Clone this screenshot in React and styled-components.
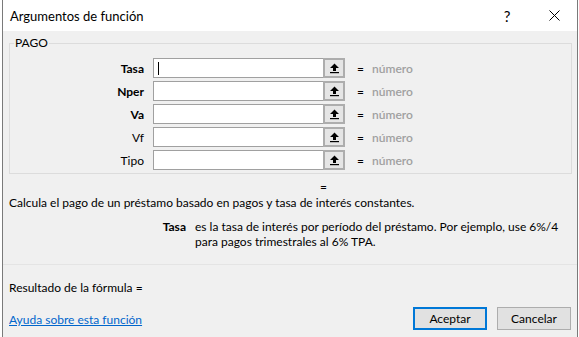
import React from 'react';
import styled, { createGlobalStyle } from 'styled-components';

const GlobalStyle = createGlobalStyle`
	body {
		margin: 0;
		background: #ffffff;
		font-family: 'Lato', 'Noto Sans', sans-serif;
		font-size: 12px;
		color: #000000;
	}
`;

const Window = styled.div`
	width: 574px;
	height: 337px;
	margin-left: 2px;
	border-left: 1px solid #7a7a7a;
	border-right: 1px solid #7a7a7a;
	background: #f0f0f0;
	display: flex;
	flex-direction: column;
	overflow: hidden;
`;

const TitleBar = styled.div`
	height: 31px;
	flex-shrink: 0;
	background: #ffffff;
	display: flex;
	align-items: center;
	padding-left: 7px;
	.title {
		flex: 1;
		font-size: 13px;
	}
	.help {
		width: 30px;
		font-size: 15px;
		text-align: center;
		margin-right: 17px;
	}
	.close {
		width: 30px;
		display: flex;
		justify-content: center;
		margin-right: 8px;
	}
`;

const Content = styled.div`
	flex: 1;
	display: flex;
	flex-direction: column;
	padding: 0 6px;
`;

const Group = styled.fieldset`
	margin: 4px 0 0 0;
	width: 563px;
	box-sizing: border-box;
	border: 1px solid #dcdcdc;
	padding: 7px 0 3px 0;
	legend {
		padding: 0 1px;
		margin-left: 4px;
		font-size: 12px;
		line-height: 16px;
	}
`;

const ArgList = styled.div`
	display: flex;
	flex-direction: column;
	gap: 3px;
`;

const ArgRow = styled.div`
	display: flex;
	align-items: center;
	height: 20px;
`;

const ArgLabel = styled.div`
	width: 143px;
	text-align: right;
	font-weight: ${p => (p.$required ? 700 : 400)};
	padding-right: 9px;
	box-sizing: border-box;
`;

const ArgInput = styled.div`
	width: 170px;
	height: 20px;
	box-sizing: border-box;
	background: #ffffff;
	border: 1px solid #a0a0a0;
	border-right: none;
	display: flex;
	align-items: center;
	padding-left: 4px;
	.caret {
		width: 1px;
		height: 13px;
		background: #000000;
	}
`;

const RefButton = styled.div`
	width: 22px;
	height: 20px;
	box-sizing: border-box;
	border: 2px solid #adadad;
	background: #e5e5e5;
	display: flex;
	align-items: center;
	justify-content: center;
`;

const Equals = styled.span`
	margin-left: 12px;
	width: 15px;
`;

const Hint = styled.span`
	color: #a0a0a0;
	font-weight: 600;
`;

const Line = styled.div`
	line-height: 16px;
	padding-left: ${p => p.$indent || 0}px;
	margin-top: ${p => p.$top || 0}px;
`;

const Description = styled.div`
	display: grid;
	grid-template-columns: 177px 1fr;
	column-gap: 9px;
	margin-top: 8px;
	line-height: 15px;
	.arg {
		text-align: right;
		font-weight: 700;
	}
	.text span {
		display: block;
		white-space: nowrap;
	}
`;

const Separator = styled.div`
	height: 1px;
	background: #e4e4e4;
	margin: 15px -6px 0 -6px;
`;

const Footer = styled.div`
	display: flex;
	align-items: center;
	margin-top: 11px;
	a {
		flex: 1;
		color: #0066cc;
		text-decoration: underline;
		padding-top: 2px;
	}
`;

const Button = styled.button`
	width: 74px;
	height: 23px;
	box-sizing: border-box;
	margin-left: ${p => (p.$gap ? 10 : 0)}px;
	background: #e1e1e1;
	border: ${p => (p.$primary ? '2px solid #0078d7' : '1px solid #adadad')};
	font-family: inherit;
	font-size: 12px;
	color: #000000;
	padding: 0;
`;

const UpArrow = () => (
	<svg width="11" height="11" viewBox="0 0 11 11">
		<polygon points="5.5,0.5 10,5 7,5 7,8 4,8 4,5 1,5" fill="#000" />
		<rect x="1" y="9" width="9" height="1.2" fill="#000" />
	</svg>
);

const args = [
	{ name: 'Tasa', required: true, focused: true },
	{ name: 'Nper', required: true },
	{ name: 'Va', required: true },
	{ name: 'Vf' },
	{ name: 'Tipo' },
];

export default function App() {
	return (
		<>
			<GlobalStyle />
			<Window>
				<TitleBar>
					<span className="title">Argumentos de función</span>
					<span className="help">?</span>
					<span className="close">
						<svg width="11" height="11" viewBox="0 0 11 11">
							<path d="M0.5 0.5 L10.5 10.5 M10.5 0.5 L0.5 10.5" stroke="#000" strokeWidth="1" />
						</svg>
					</span>
				</TitleBar>
				<Content>
					<Group>
						<legend>PAGO</legend>
						<ArgList>
							{args.map(a => (
								<ArgRow key={a.name}>
									<ArgLabel $required={a.required}>{a.name}</ArgLabel>
									<ArgInput>{a.focused && <span className="caret" />}</ArgInput>
									<RefButton><UpArrow /></RefButton>
									<Equals>=</Equals>
									<Hint>número</Hint>
								</ArgRow>
							))}
						</ArgList>
					</Group>
					<Line $indent={311} $top={5}>=</Line>
					<Line>Calcula el pago de un préstamo basado en pagos y tasa de interés constantes.</Line>
					<Description>
						<span className="arg">Tasa</span>
						<span className="text">
							<span>es la tasa de interés por período del préstamo. Por ejemplo, use 6%/4</span>
							<span>para pagos trimestrales al 6% TPA.</span>
						</span>
					</Description>
					<Separator />
					<Line $top={15}>Resultado de la fórmula =</Line>
					<Footer>
						<a href="#">Ayuda sobre esta función</a>
						<Button $primary>Aceptar</Button>
						<Button $gap>Cancelar</Button>
					</Footer>
				</Content>
			</Window>
		</>
	);
}
